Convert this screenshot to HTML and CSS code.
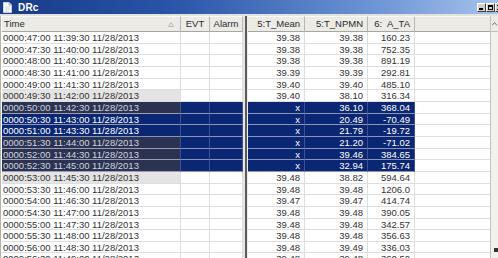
FILE: index.html
```html
<!DOCTYPE html>
<html>
<head>
<meta charset="utf-8">
<link rel="stylesheet" href="styles.css">
</head>
<body>
<div class="window">
  <div class="titlebar">
    <svg class="title-icon" width="9" height="11" viewBox="0 0 9 11"><path d="M0.5 0.5 H6 L8.5 3 V10.5 H0.5 Z" fill="#fff" stroke="#c8d4e8"/><path d="M6 0.5 V3 H8.5" fill="#dde4f0" stroke="#9fb0cc"/><path d="M2 5 H7 M2 7 H7 M2 9 H6" stroke="#b8c4da" stroke-width="0.8"/></svg>
    <span class="title">DRc</span>
    <div class="tb-buttons">
      <span class="tb-btn"><i class="min"></i></span>
      <span class="tb-btn"><i class="max"></i></span>
      <span class="tb-btn"><i class="cls"></i></span>
    </div>
  </div>
  <div class="strip"></div>
  <div class="content">
    <div class="pane left">
      <div class="row hdr">
        <div class="c time">Time<svg class="sort" width="6" height="5" viewBox="0 0 6 5"><path d="M3 0.5 L5.5 4.5 H0.5 Z" fill="none" stroke="#b9b7b0"/></svg></div>
        <div class="c ctr">EVT</div>
        <div class="c ctr">Alarm</div>
      </div>
      <div class="row"><div class="c time">0000:47:00 11:39:30 11/28/2013</div><div class="c"></div><div class="c"></div></div>
      <div class="row"><div class="c time">0000:47:30 11:40:00 11/28/2013</div><div class="c"></div><div class="c"></div></div>
      <div class="row"><div class="c time">0000:48:00 11:40:30 11/28/2013</div><div class="c"></div><div class="c"></div></div>
      <div class="row"><div class="c time">0000:48:30 11:41:00 11/28/2013</div><div class="c"></div><div class="c"></div></div>
      <div class="row"><div class="c time">0000:49:00 11:41:30 11/28/2013</div><div class="c"></div><div class="c"></div></div>
      <div class="row"><div class="c time near">0000:49:30 11:42:00 11/28/2013</div><div class="c"></div><div class="c"></div></div>
      <div class="row sel"><div class="c time slate">0000:50:00 11:42:30 11/28/2013</div><div class="c"></div><div class="c"></div></div>
      <div class="row sel"><div class="c time">0000:50:30 11:43:00 11/28/2013</div><div class="c"></div><div class="c"></div></div>
      <div class="row sel"><div class="c time">0000:51:00 11:43:30 11/28/2013</div><div class="c"></div><div class="c"></div></div>
      <div class="row sel"><div class="c time slate">0000:51:30 11:44:00 11/28/2013</div><div class="c"></div><div class="c"></div></div>
      <div class="row sel"><div class="c time slate">0000:52:00 11:44:30 11/28/2013</div><div class="c"></div><div class="c"></div></div>
      <div class="row sel"><div class="c time slate">0000:52:30 11:45:00 11/28/2013</div><div class="c"></div><div class="c"></div></div>
      <div class="row"><div class="c time near">0000:53:00 11:45:30 11/28/2013</div><div class="c"></div><div class="c"></div></div>
      <div class="row"><div class="c time">0000:53:30 11:46:00 11/28/2013</div><div class="c"></div><div class="c"></div></div>
      <div class="row"><div class="c time">0000:54:00 11:46:30 11/28/2013</div><div class="c"></div><div class="c"></div></div>
      <div class="row"><div class="c time">0000:54:30 11:47:00 11/28/2013</div><div class="c"></div><div class="c"></div></div>
      <div class="row"><div class="c time">0000:55:00 11:47:30 11/28/2013</div><div class="c"></div><div class="c"></div></div>
      <div class="row"><div class="c time">0000:55:30 11:48:00 11/28/2013</div><div class="c"></div><div class="c"></div></div>
      <div class="row"><div class="c time">0000:56:00 11:48:30 11/28/2013</div><div class="c"></div><div class="c"></div></div>
      <div class="row"><div class="c time">0000:56:30 11:49:00 11/28/2013</div><div class="c"></div><div class="c"></div></div>
    </div>
    <div class="splitter"></div>
    <div class="pane right">
      <div class="row hdr">
        <div class="c num">5:T_Mean</div>
        <div class="c num">5:T_NPMN</div>
        <div class="c num">6:&nbsp; A_TA</div>
        <div class="c empty"></div>
      </div>
      <div class="row"><div class="c num">39.38</div><div class="c num">39.38</div><div class="c num">160.23</div><div class="c empty"></div></div>
      <div class="row"><div class="c num">39.38</div><div class="c num">39.38</div><div class="c num">752.35</div><div class="c empty"></div></div>
      <div class="row"><div class="c num">39.38</div><div class="c num">39.38</div><div class="c num">891.19</div><div class="c empty"></div></div>
      <div class="row"><div class="c num">39.39</div><div class="c num">39.39</div><div class="c num">292.81</div><div class="c empty"></div></div>
      <div class="row"><div class="c num">39.40</div><div class="c num">39.40</div><div class="c num">485.10</div><div class="c empty"></div></div>
      <div class="row"><div class="c num">39.40</div><div class="c num">38.10</div><div class="c num">316.34</div><div class="c empty"></div></div>
      <div class="row sel"><div class="c num">x</div><div class="c num">36.10</div><div class="c num">368.04</div><div class="c empty"></div></div>
      <div class="row sel"><div class="c num">x</div><div class="c num">20.49</div><div class="c num">-70.49</div><div class="c empty"></div></div>
      <div class="row sel"><div class="c num">x</div><div class="c num">21.79</div><div class="c num">-19.72</div><div class="c empty"></div></div>
      <div class="row sel"><div class="c num">x</div><div class="c num">21.20</div><div class="c num">-71.02</div><div class="c empty"></div></div>
      <div class="row sel"><div class="c num">x</div><div class="c num">39.46</div><div class="c num">384.65</div><div class="c empty"></div></div>
      <div class="row sel"><div class="c num">x</div><div class="c num">32.94</div><div class="c num">175.74</div><div class="c empty"></div></div>
      <div class="row"><div class="c num">39.48</div><div class="c num">38.82</div><div class="c num">594.64</div><div class="c empty"></div></div>
      <div class="row"><div class="c num">39.48</div><div class="c num">39.48</div><div class="c num">1206.0</div><div class="c empty"></div></div>
      <div class="row"><div class="c num">39.47</div><div class="c num">39.47</div><div class="c num">414.74</div><div class="c empty"></div></div>
      <div class="row"><div class="c num">39.48</div><div class="c num">39.48</div><div class="c num">390.05</div><div class="c empty"></div></div>
      <div class="row"><div class="c num">39.48</div><div class="c num">39.48</div><div class="c num">342.57</div><div class="c empty"></div></div>
      <div class="row"><div class="c num">39.48</div><div class="c num">39.48</div><div class="c num">356.63</div><div class="c empty"></div></div>
      <div class="row"><div class="c num">39.48</div><div class="c num">39.49</div><div class="c num">336.03</div><div class="c empty"></div></div>
      <div class="row"><div class="c num">39.48</div><div class="c num">39.48</div><div class="c num">360.50</div><div class="c empty"></div></div>
    </div>
    <div class="scrollbar">
      <div class="sb-btn"><svg width="5" height="4" viewBox="0 0 5 4"><path d="M0 3.5 L2.5 0.5 L5 3.5" fill="none" stroke="#777"/></svg></div>
      <div class="sb-track"></div>
      <div class="sb-mark"></div>
    </div>
  </div>
</div>
</body>
</html>
```

FILE: styles.css
```css
* { box-sizing: border-box; }
html, body { margin: 0; padding: 0; }
body {
  width: 498px;
  height: 258px;
  overflow: hidden;
  background: #fff;
  font-family: "Liberation Sans", Arial, sans-serif;
}
.window {
  width: 498px;
  height: 258px;
  display: flex;
  flex-direction: column;
  background: #d4d0c8;
  overflow: hidden;
}
.titlebar {
  height: 14px;
  flex: none;
  display: flex;
  align-items: center;
  padding-left: 3px;
  background: linear-gradient(to right, #173a86 0%, #2a55a8 35%, #6d94d4 75%, #a4c2ec 100%);
}
.title-icon { margin-right: 6px; }
.title {
  color: #fff;
  font-weight: bold;
  font-size: 10px;
  letter-spacing: 0.2px;
}
.tb-buttons {
  margin-left: auto;
  margin-right: -6px;
  display: flex;
}
.tb-btn {
  width: 9px;
  height: 9px;
  background: #d4d0c8;
  border: 1px solid;
  border-color: #fff #404040 #404040 #fff;
  position: relative;
}
.tb-btn i { position: absolute; display: block; }
.tb-btn .min { left: 1px; bottom: 1px; width: 4px; height: 2px; background: #000; }
.tb-btn .max { left: 1px; top: 1px; width: 5px; height: 5px; border: 1px solid #000; border-top-width: 2px; }
.tb-btn .cls { left: 1px; top: 1px; width: 5px; height: 5px; background: linear-gradient(45deg, transparent 40%, #000 40%, #000 60%, transparent 60%), linear-gradient(-45deg, transparent 40%, #000 40%, #000 60%, transparent 60%); }
.strip {
  height: 2px;
  flex: none;
  background: #e4e2dc;
}
.content {
  flex: 1;
  display: flex;
  background: #fff;
  border-left: 1px solid #b4b2ac;
  padding-left: 1px;
  min-height: 0;
}
.pane {
  display: flex;
  flex-direction: column;
  flex: none;
}
.left { width: 241px; }
.right { width: 242px; }
.row {
  display: grid;
  height: 11.67px;
  flex: none;
  font-size: 9.5px;
  line-height: 11px;
  color: #333;
}
.left .row { grid-template-columns: 179px 29px 33px; }
.right .row { grid-template-columns: 57px 63px 47px 75px; }
.row.hdr {
  height: 16px;
  line-height: 14px;
  background: #ecebe6;
  color: #2a2a2a;
}
.c {
  border-right: 1px solid #dedede;
  border-bottom: 1px solid #dedede;
  white-space: nowrap;
  overflow: hidden;
  padding: 0 1px;
}
.hdr .c {
  border-right: 1px solid #b8b6b0;
  border-bottom: 1px solid #a8a6a0;
  border-top: 1px solid #fafaf8;
  padding: 0 3px;
  display: flex;
  align-items: center;
}
.hdr .c.time { padding-left: 2px; }
.sort { margin-left: auto; margin-right: 3px; }
.hdr .ctr { justify-content: center; }
.hdr .num { justify-content: flex-end; padding-right: 4px; }
.hdr .empty { border-right: none; }
.num { text-align: right; padding-right: 4px; }
.empty { border-right: none; }
.time.near { background: #e4e4e4; }
.sel .c {
  background: #0b2672;
  color: #fff;
  border-right-color: #3e5090;
  border-bottom-color: #8a96b8;
}
.sel .c.time.slate {
  background: #2c3352;
  color: #d0d4de;
  border-bottom-color: #9aa0b2;
}
.sel .c.empty {
  background: #fff;
  border-bottom-color: #dedede;
}
.splitter {
  width: 5px;
  flex: none;
  background: linear-gradient(to right, #e6e6e6 0 2px, #5a5a5a 2px 4px, #ececec 4px);
}
.scrollbar {
  flex: 1;
  display: flex;
  flex-direction: column;
  background: #f2f1ec;
  border-left: 1px solid #c4c2bc;
}
.sb-btn {
  height: 16px;
  display: flex;
  align-items: center;
  justify-content: center;
  background: #ecebe6;
  border-bottom: 1px solid #c4c2bc;
}
.sb-track { flex: 1; }
.sb-mark {
  height: 4px;
  margin: 0 0 6px 3px;
  width: 4px;
  background: #333;
}
```
